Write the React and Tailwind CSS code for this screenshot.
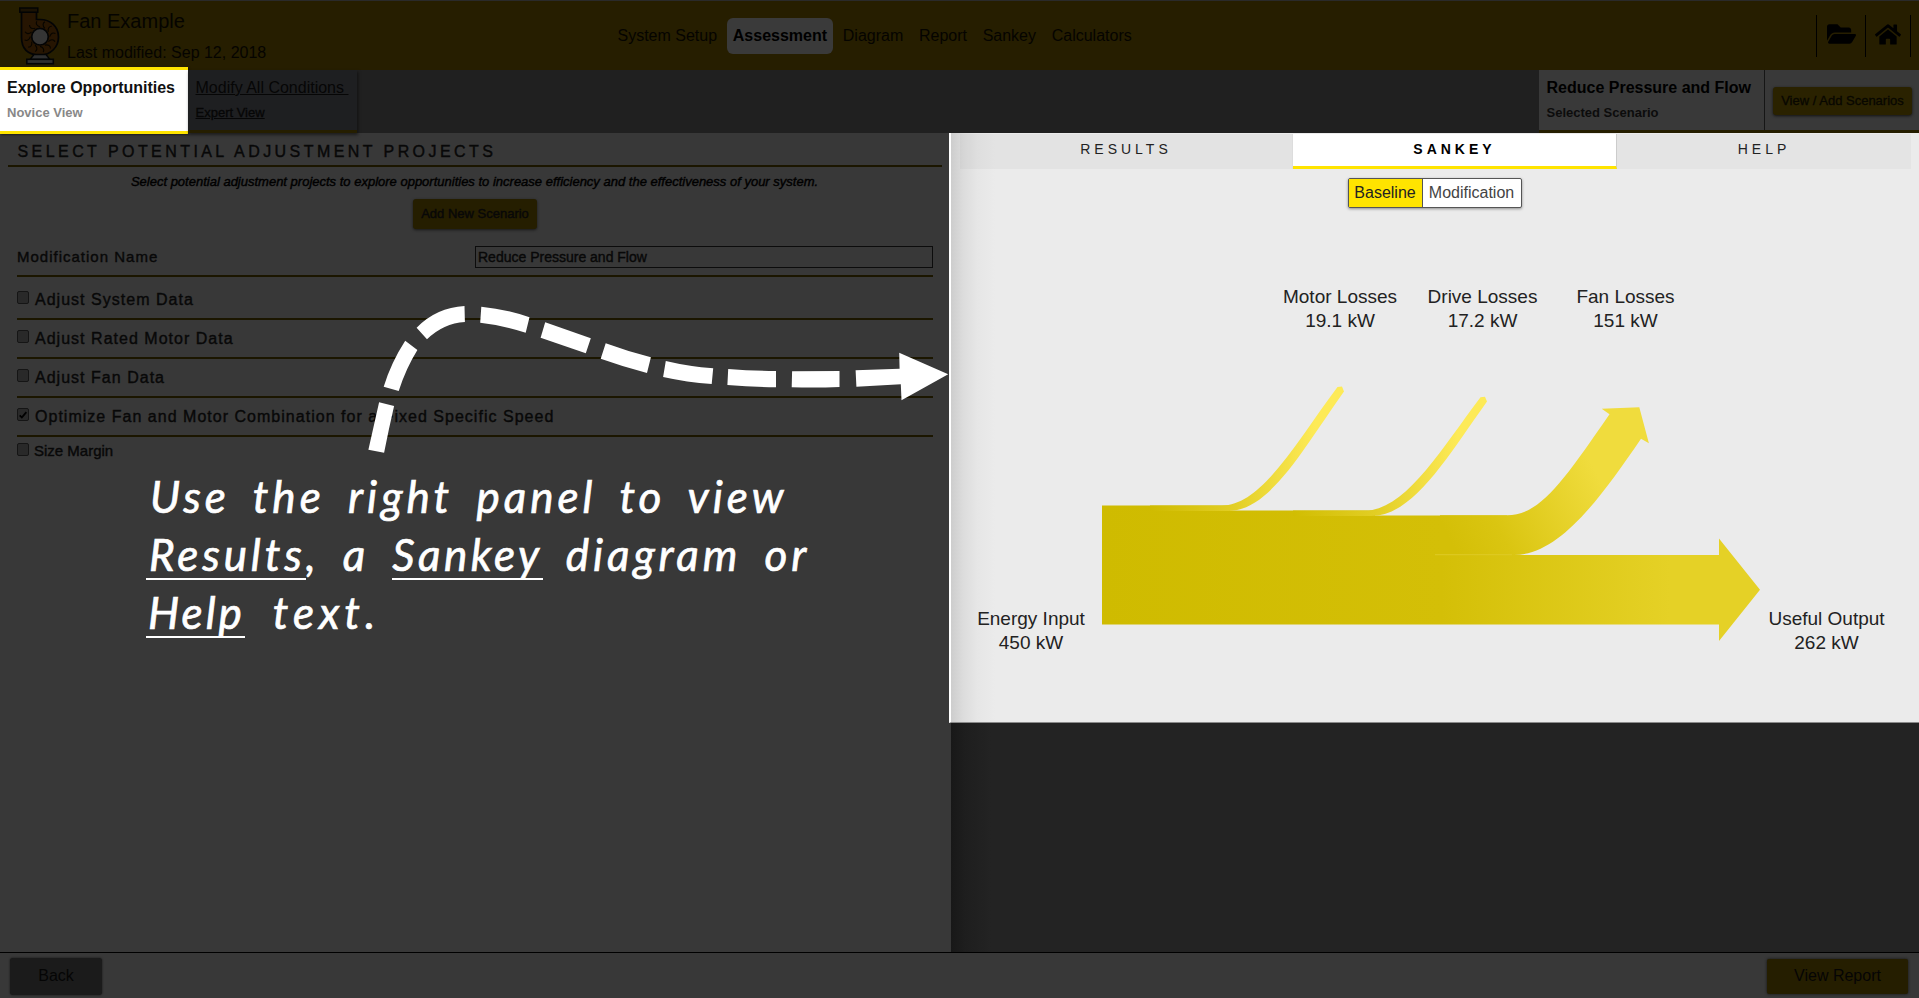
import React from "react";
import { FaFolderOpen, FaHome } from "react-icons/fa";

const navItems = ["System Setup", "Assessment", "Diagram", "Report", "Sankey", "Calculators"];

function FanLogo() {
  const blades = [0, 30, 60, 90, 120, 150, 180, 210, 240, 270, 300, 330];
  return (
    <svg className="block h-[58px] w-[41px]" viewBox="0 0 41 58">
      <path d="M2.500 5 V30 C2.500 43 10 48 21 48 C32 48 39.500 40 39.500 30 C39.500 19 31 12.500 21 12.500 H17.500 V5 Z" fill="#261502" stroke="#030405" strokeWidth="1.700" />
      <rect x="0.800" y="1" width="18" height="4.200" fill="#1b1203" stroke="#030405" strokeWidth="1.500" />
      {blades.map((a) => (
        <path key={a} d="M21 20 C17.500 19 16.500 16.500 17.800 14.300" transform={`rotate(${a} 21 29.700)`} fill="none" stroke="#070500" strokeWidth="1.100" />
      ))}
      <circle cx="21" cy="29.700" r="8.300" fill="#353535" stroke="#030405" strokeWidth="1.700" />
      <path d="M15 47.500 H27 L31 52.500 H11 Z" fill="#2f2f2f" stroke="#030405" strokeWidth="1.400" />
      <rect x="7.800" y="52.300" width="26.500" height="4.400" fill="#2f2f2f" stroke="#030405" strokeWidth="1.600" />
    </svg>
  );
}

function Header() {
  return (
    <header className="flex h-[70px] shrink-0 border-t border-[#2a2a2a] bg-[#261e00] text-[#050400]">
      <div className="flex w-[611.500px] pl-[19px] pt-1.5">
        <FanLogo />
        <div className="pl-[7px]">
          <div className="text-[20px] leading-[28px]">Fan Example</div>
          <div className="mt-[6px] text-[16px] leading-[24px]">Last modified: Sep 12, 2018</div>
        </div>
      </div>
      <nav className="flex flex-1 gap-[3.700px] pt-[17px] text-[16px] leading-[35px]">
        {navItems.map((n) => (
          <span key={n} className={n === "Assessment" ? "h-9 rounded-md bg-[#3a3a3a] px-1.5 font-bold text-black" : "h-9 px-1.5"}>
            {n}
          </span>
        ))}
      </nav>
      <div className="mr-2 mt-3.5 flex h-[42px] items-center border-x border-black text-black">
        <div className="flex h-full w-[49px] items-center justify-center border-r border-black pb-1">
          <FaFolderOpen className="h-[26px] w-[29px]" />
        </div>
        <div className="flex h-full w-[44px] items-center justify-center pb-1">
          <FaHome className="h-[25px] w-[26px]" />
        </div>
      </div>
    </header>
  );
}

function SubHeader() {
  return (
    <div className="relative z-10 flex h-[63px] shrink-0 bg-[#202020]">
      <div className="-mt-[3px] h-[67px] w-[188px] border-b-[3px] border-t-[3px] border-[#ffe400] bg-white pl-[7px] pt-[8px] shadow-[1px_1px_2px_rgba(0,0,0,0.5)]">
        <div className="text-[16px] font-bold leading-5 text-[#111]">Explore Opportunities</div>
        <div className="mt-[7px] text-[13px] font-bold leading-4 text-[#888]">Novice View</div>
      </div>
      <div className="h-[63px] w-[169px] border-b-[3px] border-[#251e00] bg-[#1e1f21] pl-[7.500px] pt-[8px] text-[#060606] underline shadow-[1px_2px_3px_rgba(0,0,0,0.5)]">
        <div className="whitespace-pre text-[16px] leading-5">{"Modify All Conditions "}</div>
        <div className="mt-[7px] text-[13px] leading-4 [-webkit-text-stroke:0.3px]">Expert View</div>
      </div>
      <div className="flex-1" />
      <div className="flex w-[380px] border-b-[3px] border-[#251e00] bg-[#393939]">
        <div className="w-[226px] border-r border-[#161616] pl-[7.500px] pt-[8px] text-black">
          <div className="text-[16px] font-bold leading-5">Reduce Pressure and Flow</div>
          <div className="mt-[7px] text-[13px] font-bold leading-4 text-[#0c0c0c]">Selected Scenario</div>
        </div>
        <div className="flex flex-1 justify-center pl-px pt-[17px]">
          <div className="h-7 w-[139px] rounded-[3px] bg-[#2a2200] text-center text-[13px] leading-[27px] text-[#080700] shadow-[0_1px_3px_rgba(0,0,0,0.7)] [-webkit-text-stroke:0.3px]">View / Add Scenarios</div>
        </div>
      </div>
    </div>
  );
}

function Check({ on }) {
  return (
    <span className="flex h-[13px] w-[12px] shrink-0 items-center justify-center rounded-[2px] border border-[#151515] bg-[#292929]">
      {on && (
        <svg viewBox="0 0 12 12" className="h-3 w-3">
          <path d="M2 6.500 L4.600 9 L10 2.500" fill="none" stroke="#000" strokeWidth="2.200" />
        </svg>
      )}
    </span>
  );
}

function ProjectRow({ label, on, tall }) {
  return (
    <div className={tall ? "flex h-[43px] border-b-2 border-[#1b1600] pt-[13px]" : "flex h-[39px] border-b-2 border-[#1b1600] pt-[9px]"}>
      <div className="pt-px">
        <Check on={on} />
      </div>
      <div className="pl-[6px] text-[16px] leading-5 tracking-[1.020px]">{label}</div>
    </div>
  );
}

function LeftPanel() {
  return (
    <section className="w-[951px] bg-[#383838] text-[#080808] [-webkit-text-stroke:0.4px]">
      <div className="ml-2 mr-[9px] h-[34px] border-b-2 border-[#1b1600] pl-[9.500px] pt-[9px] text-[16px] leading-5 tracking-[3.430px]">SELECT POTENTIAL ADJUSTMENT PROJECTS</div>
      <div className="mt-[5px] whitespace-nowrap pr-0.5 text-center text-[13px] italic leading-5 text-black">
        Select potential adjustment projects to explore opportunities to increase efficiency and the effectiveness of your system.
      </div>
      <div className="ml-[413px] mt-[7px] h-[30px] w-[124px] rounded-[3px] bg-[#251e00] text-center text-[13px] leading-[29px] shadow-[0_1px_3px_rgba(0,0,0,0.6)]">Add New Scenario</div>
      <div className="ml-[17px] mr-[18px]">
        <div className="flex h-[48px] border-b-2 border-[#1b1600] pt-[17px]">
          <div className="w-[458px] pt-px text-[15px] leading-5 tracking-[1px]">Modification Name</div>
          <div className="h-[22px] flex-1 border border-[#0c0c0c] pl-0.5 text-[14px] leading-5">Reduce Pressure and Flow</div>
        </div>
        <ProjectRow label="Adjust System Data" tall />
        <ProjectRow label="Adjust Rated Motor Data" />
        <ProjectRow label="Adjust Fan Data" />
        <ProjectRow label="Optimize Fan and Motor Combination for a Fixed Specific Speed" on />
        <div className="flex pt-1">
          <div className="pt-0.5">
            <Check />
          </div>
          <div className="pl-[5px] text-[15px] leading-5">Size Margin</div>
        </div>
      </div>
    </section>
  );
}

function Label({ x, y, name, value }) {
  return (
    <text x={x} y={y} textAnchor="middle" fontSize="19" fill="#222">
      {name}
      <tspan x={x} dy="24">{value}</tspan>
    </text>
  );
}

function SankeyChart() {
  return (
    <svg className="block h-[515px] w-[968px]" viewBox="951 208 968 515">
      <defs>
        <linearGradient id="out" gradientUnits="userSpaceOnUse" x1="1102" x2="1719" y1="0" y2="0">
          <stop offset="0" stopColor="#cfbb00" />
          <stop offset="0.550" stopColor="#d4bf07" />
          <stop offset="0.920" stopColor="#e5d126" />
          <stop offset="1" stopColor="#e5d126" />
        </linearGradient>
        <linearGradient id="fan" gradientUnits="userSpaceOnUse" x1="1450" x2="1592" y1="540" y2="465">
          <stop offset="0" stopColor="#d4bf07" />
          <stop offset="0.300" stopColor="#dac511" />
          <stop offset="1" stopColor="#f0dc3d" />
        </linearGradient>
        <linearGradient id="motor" gradientUnits="userSpaceOnUse" x1="1150" x2="1315" y1="0" y2="0">
          <stop offset="0" stopColor="#cfbb00" />
          <stop offset="0.500" stopColor="#e2ce24" />
          <stop offset="1" stopColor="#fdea57" />
        </linearGradient>
        <linearGradient id="drive" gradientUnits="userSpaceOnUse" x1="1293" x2="1458" y1="0" y2="0">
          <stop offset="0" stopColor="#d1bd02" />
          <stop offset="0.500" stopColor="#e2ce24" />
          <stop offset="1" stopColor="#fdea57" />
        </linearGradient>
      </defs>
      <path d="M1102 505.500 H1230 V510.500 H1375 V515.500 H1507 V555 H1719 V538.500 L1760 589.700 L1719 641 V624.500 H1102 Z" fill="url(#out)" />
      <path d="M1440 515.300 H1507 C1540 515 1562 483 1609.500 414.300 L1601.700 408.700 L1639.300 407.300 L1648.900 443.300 L1641 438.700 C1598 502 1558 555 1514 555 H1440 Z" fill="url(#fan)" />
      <path d="M1435 554.700 H1512" stroke="#deca25" strokeWidth="1" />
      <path d="M1150 505.500 H1222 C1262 505.500 1297 441 1337.500 387 L1342 386.500 L1344 391.500 C1303 449 1270 511 1228 511 H1150 Z" fill="url(#motor)" />
      <path d="M1293 510.600 H1365 C1405 510.600 1440 451 1480.500 397.300 L1485 396.800 L1487 401.500 C1446 459 1413 516 1371 516 H1293 Z" fill="url(#drive)" />
      <Label x={1340} y={303} name="Motor Losses" value="19.1 kW" />
      <Label x={1482.5} y={303} name="Drive Losses" value="17.2 kW" />
      <Label x={1625.5} y={303} name="Fan Losses" value="151 kW" />
      <Label x={1031} y={624.5} name="Energy Input" value="450 kW" />
      <Label x={1826.5} y={624.5} name="Useful Output" value="262 kW" />
    </svg>
  );
}

function RightPanel() {
  return (
    <section className="flex-1 bg-[#232323] bg-[linear-gradient(to_right,#181818,#1e1e1e_14px,#232323_40px)]">
      <div className="-ml-[2px] h-[590px] border-b border-l-2 border-b-[#8a8a8a] border-l-white bg-[#ebebeb] bg-[linear-gradient(to_right,#cdcdcd,#dcdcdc_12px,#e6e6e6_26px,#ebebeb_44px)] pt-px">
        <div className="flex h-[35px] pl-[9px] pr-2 text-center text-[14px] leading-[31px] tracking-[4px] text-[#222]">
          <div className="w-[333px] border-r border-[#ddd] bg-black/[0.030]">RESULTS</div>
          <div className="w-[324px] border-b-[3px] border-r border-b-[#ffe400] border-r-[#ccc] bg-white font-bold text-black">SANKEY</div>
          <div className="flex-1 bg-[#e4e4e4]">HELP</div>
        </div>
        <div className="flex h-[39px] justify-center pr-px pt-[9px] text-[16px]">
          <div className="flex h-[30px] rounded-[2px] border border-[#555] bg-white leading-[27px] shadow-[0_1px_3px_rgba(0,0,0,0.4)]">
            <span className="w-[74px] border-r border-[#555] bg-[#ffe400] text-center text-[#222]">Baseline</span>
            <span className="w-[98px] text-center text-[#444]">Modification</span>
          </div>
        </div>
        <SankeyChart />
      </div>
    </section>
  );
}

function GuideArrow() {
  return (
    <svg className="pointer-events-none absolute left-0 top-0 z-20 h-[998px] w-[950px]" viewBox="0 0 950 998" fill="#fff">
      <path d="M368.400 449.700 L384.100 452.700 Q389 428 394.100 406 L379.100 402.300 Q374 425 368.400 449.700 Z" />
      <path d="M383.700 386.700 Q391 362.700 405.200 340.700 L417.400 350 Q406 368.300 398.700 391 Z" />
      <path d="M416.600 327.700 Q436.500 307.500 464.500 306 L464.900 322 Q443.400 323.300 427 339.300 Z" />
      <path d="M481.300 306.700 Q505.400 309 529.500 317.300 L525.700 332.700 Q501.600 325 480.200 322.700 Z" />
      <path d="M545.200 322.300 L590.800 338.300 L585.800 353.300 L540.600 337.700 Z" />
      <path d="M605.700 343.300 Q628 351.500 650.900 357.300 L647 373 Q624 367 600.700 358.700 Z" />
      <path d="M665.800 361 Q689 366.500 713.200 368.300 L711.700 384 Q687 382.300 663.100 377 Z" />
      <path d="M728.200 369 Q752 371 776 371 V387.300 Q752 387 727.400 385 Z" />
      <path d="M792.100 371.300 L839.500 371 V387 Q816 388 791.700 387.300 Z" />
      <path d="M855.600 370.300 L899.600 368.700 L899.200 352.700 L948.200 374.300 L901.500 400.300 L900.800 384.300 L856.400 386.700 Z" />
    </svg>
  );
}

function GuideText() {
  return (
    <div className="pointer-events-none absolute left-[146px] top-[467px] z-20 whitespace-nowrap font-['Lato',sans-serif] text-[44px] italic leading-[58px] tracking-[4px] text-white [-webkit-text-stroke:0.7px] [word-spacing:9px]">
      <div className="pl-[4px]">Use the right panel to view</div>
      <div className="tracking-[3.900px] [word-spacing:9px]">
        <span className="inline-block h-[55px] border-b-2 border-white pl-[3px] align-top">Results</span>, a{" "}
        <span className="inline-block h-[55px] border-b-2 border-white align-top tracking-[3.500px]">Sankey</span> diagram or
      </div>
      <div>
        <span className="inline-block h-[55px] border-b-2 border-white pl-[2px] align-top tracking-[3px]">Help</span>
        <span className="pl-1 tracking-[5px]"> text.</span>
      </div>
    </div>
  );
}

export default function App() {
  return (
    <div className="relative flex h-[998px] w-full flex-col overflow-hidden bg-[#383838] font-['Liberation_Sans',Arial,sans-serif]">
      <Header />
      <SubHeader />
      <main className="flex h-[819px] shrink-0">
        <LeftPanel />
        <RightPanel />
      </main>
      <footer className="flex flex-1 justify-between border-t border-black bg-[#383838] pl-2.5 pr-[11px] pt-[5px] text-[16px] text-[#050505]">
        <div className="h-[37px] w-[92px] rounded-[3px] bg-[#1b1b1b] text-center leading-[35px] shadow-[0_0_2px_#111]">Back</div>
        <div className="mt-px h-[35px] w-[141px] rounded-[2px] bg-[#251e00] text-center leading-[33px] shadow-[0_0_3px_#111]">View Report</div>
      </footer>
      <GuideArrow />
      <GuideText />
    </div>
  );
}
